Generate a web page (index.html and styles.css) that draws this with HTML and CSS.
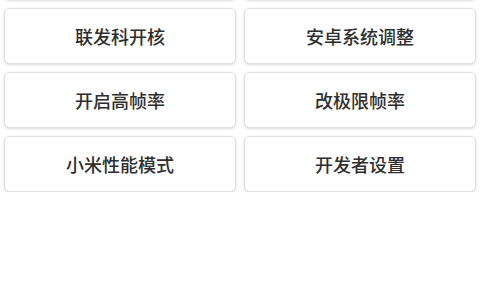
FILE: index.html
```html
<!DOCTYPE html>
<html lang="zh-CN">
<head>
<meta charset="UTF-8">
<meta name="viewport" content="width=device-width, initial-scale=1.0">
<title>工具箱</title>
<link rel="stylesheet" href="styles.css">
</head>
<body>
  <div class="menu">
    <div class="item"></div>
    <div class="item"></div>
    <div class="item">联发科开核</div>
    <div class="item">安卓系统调整</div>
    <div class="item">开启高帧率</div>
    <div class="item">改极限帧率</div>
    <div class="item">小米性能模式</div>
    <div class="item">开发者设置</div>
  </div>
</body>
</html>
```

FILE: styles.css
```css
  body {
    margin: 0;
    padding: 0;
    background: #ffffff;
    font-family: "Noto Sans CJK SC", "Noto Sans", sans-serif;
    overflow: hidden;
  }

  .menu {
    display: grid;
    grid-template-columns: 1fr 1fr;
    grid-auto-rows: 56px;
    gap: 8px;
    padding: 0 4px;
    margin-top: -56px;
  }

  .item {
    display: flex;
    justify-content: center;
    align-items: center;
    background: #ffffff;
    border: 1px solid #e0e0e0;
    border-radius: 6px;
    box-shadow: 0 1px 3px rgba(0, 0, 0, 0.15);
    color: #2e2e2e;
    font-size: 18px;
    font-weight: 500;
    box-sizing: border-box;
  }
```
